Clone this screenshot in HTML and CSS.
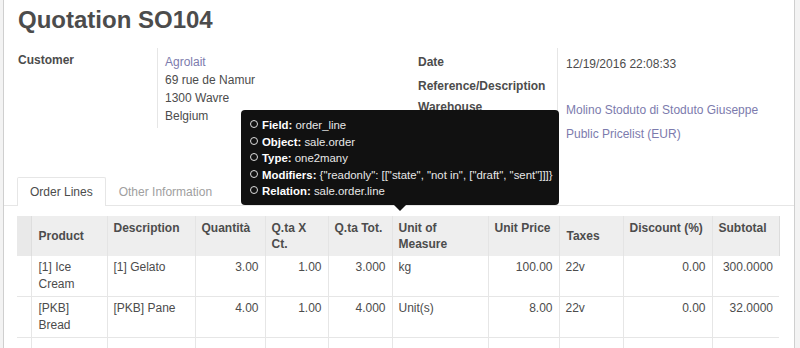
FILE: index.html
```html
<!DOCTYPE html>
<html lang="en">
<head>
    <meta charset="UTF-8">
    <title>Quotation SO104</title>
    <link rel="stylesheet" href="styles.css">
</head>
<body>
    <div class="sheet">
        <h1 class="title">Quotation SO104</h1>

        <div class="groups">
            <div class="group group-left">
                <div class="label">Customer</div>
                <div class="value address"><a href="#" class="link">Agrolait</a><br>69 rue de Namur<br>1300 Wavre<br>Belgium</div>
            </div>

            <div class="group group-right">
                <div class="label row-1">Date</div>
                <div class="value row-1">12/19/2016 22:08:33</div>
                <div class="label row-2">Reference/Description</div>
                <div class="value row-2"></div>
                <div class="label row-3">Warehouse</div>
                <div class="value row-3"><a href="#" class="link">Molino Stoduto di Stoduto Giuseppe</a></div>
                <div class="label row-4">Pricelist</div>
                <div class="value row-4"><a href="#" class="link">Public Pricelist (EUR)</a></div>
            </div>
        </div>

        <div class="notebook">
            <ul class="tabs">
                <li class="tab active">Order Lines</li>
                <li class="tab">Other Information</li>
            </ul>

            <table class="lines">
                <colgroup>
                    <col style="width:14px">
                    <col style="width:76px">
                    <col style="width:88px">
                    <col style="width:70px">
                    <col style="width:63px">
                    <col style="width:64px">
                    <col style="width:96px">
                    <col style="width:71px">
                    <col style="width:64px">
                    <col style="width:89px">
                    <col style="width:67px">
                </colgroup>
                <thead>
                    <tr>
                        <th class="handle"></th>
                        <th class="middle">Product</th>
                        <th>Description</th>
                        <th>Quantità</th>
                        <th>Q.ta X Ct.</th>
                        <th>Q.ta Tot.</th>
                        <th>Unit of Measure</th>
                        <th>Unit Price</th>
                        <th class="middle">Taxes</th>
                        <th>Discount (%)</th>
                        <th>Subtotal</th>
                    </tr>
                </thead>
                <tbody>
                    <tr>
                        <td class="handle"></td>
                        <td>[1] Ice Cream</td>
                        <td>[1] Gelato</td>
                        <td class="num">3.00</td>
                        <td class="num">1.00</td>
                        <td class="num">3.000</td>
                        <td>kg</td>
                        <td class="num">100.00</td>
                        <td>22v</td>
                        <td class="num">0.00</td>
                        <td class="num">300.0000</td>
                    </tr>
                    <tr>
                        <td class="handle"></td>
                        <td>[PKB] Bread</td>
                        <td>[PKB] Pane</td>
                        <td class="num">4.00</td>
                        <td class="num">1.00</td>
                        <td class="num">4.000</td>
                        <td>Unit(s)</td>
                        <td class="num">8.00</td>
                        <td>22v</td>
                        <td class="num">0.00</td>
                        <td class="num">32.0000</td>
                    </tr>
                    <tr class="empty">
                        <td class="handle"></td>
                        <td></td><td></td><td></td><td></td><td></td>
                        <td></td><td></td><td></td><td></td><td></td>
                    </tr>
                </tbody>
            </table>
        </div>

        <!-- debug tooltip over the notebook -->
        <div class="tooltip">
            <ul>
                <li><b>Field:</b> order_line</li>
                <li><b>Object:</b> sale.order</li>
                <li><b>Type:</b> one2many</li>
                <li><b>Modifiers:</b> {"readonly": [["state", "not in", ["draft", "sent"]]]}</li>
                <li><b>Relation:</b> sale.order.line</li>
            </ul>
        </div>
    </div>
</body>
</html>
```

FILE: styles.css
```css
:root {
    --text-color: #4c4c4c;
    --link-color: #7c7bad;
    --border-color: #d9d9d9;
    --line-color: #e6e6e6;
    --header-bg: #eeeeee;
}

* {
    box-sizing: border-box;
}

body {
    margin: 0;
    background-color: #f3f3f3;
    font-family: 'Liberation Sans', Arial, sans-serif;
    font-size: 12px;
    line-height: 18px;
    color: var(--text-color);
    overflow: hidden;
}

.sheet {
    position: relative;
    margin: 0 5px 0 3px;
    padding: 6px 14px 0 14px;
    height: 348px;
    overflow: hidden;
    background-color: white;
    border-left: 1px solid #cfcfcf;
    border-right: 1px solid #cfcfcf;
}

.title {
    margin: 0;
    font-size: 24px;
    line-height: 28px;
    font-weight: bold;
}

.link {
    color: var(--link-color);
    text-decoration: none;
}

.groups {
    display: grid;
    grid-template-columns: 392px 1fr;
    margin-top: 14px;
}

.label {
    font-weight: bold;
}

.group-left {
    display: grid;
    grid-template-columns: 139px 1fr;
    align-self: start;
}

.group-left .label {
    padding-top: 3px;
}

.group-left .value {
    padding: 5px 0 3px 7px;
    border-left: 1px solid var(--line-color);
}

.group-right {
    display: grid;
    grid-template-columns: 147px 1fr;
    grid-template-rows: 26px 22px 24px 28px;
}

.group-right .label {
    padding-left: 8px;
}

.group-right .value {
    padding-left: 8px;
    border-left: 1px solid var(--line-color);
}

.label.row-1 { padding-top: 5px; }
.value.row-1 { padding-top: 7px; }
.label.row-2 { padding-top: 3px; }
.label.row-3 { padding-top: 2px; }
.value.row-3 { padding-top: 5px; }
.label.row-4 { padding-top: 3px; }
.value.row-4 { padding-top: 5px; }

.notebook {
    margin-top: 29px;
}

.tabs {
    display: flex;
    list-style: none;
    margin: 0 -14px;
    padding: 0 0 0 13px;
    border-bottom: 1px solid var(--line-color);
}

.tab {
    padding: 5px 12px 4px 12px;
    border: 1px solid transparent;
    border-bottom: none;
    color: #a0a0a0;
}

.tab.active {
    color: var(--text-color);
    background-color: white;
    border-color: var(--line-color);
    border-radius: 2px 2px 0 0;
    margin-bottom: -1px;
    padding-bottom: 5px;
}

.lines {
    margin: 10px 0 0 -1px;
    width: 762px;
    table-layout: fixed;
    border-collapse: collapse;
}

.lines th {
    height: 40px;
    padding: 4px 6px;
    line-height: 16px;
    text-align: left;
    vertical-align: top;
    font-weight: bold;
    background-color: var(--header-bg);
    border-right: 1px solid #e4e4e4;
}

.lines th.middle {
    vertical-align: middle;
    padding-left: 7px;
}

.lines th:last-child {
    border-right: 1px solid #dcdcdc;
}

.lines td {
    height: 40px;
    padding: 3px 6px;
    line-height: 17px;
    vertical-align: top;
    border-bottom: 1px solid var(--line-color);
    border-right: 1px solid var(--line-color);
}

.lines td:first-child + td {
    padding-left: 7px;
}

.lines td:last-child {
    border-right: none;
}

.lines .handle {
    padding: 0;
    background-color: transparent;
}

.lines th.handle {
    background-color: #e9e9e9;
    border-right: 1px solid #dedede;
}

.lines .num {
    text-align: right;
}

.tooltip {
    position: absolute;
    left: 237px;
    top: 110px;
    width: 318px;
    height: 95px;
    padding: 7px 4px 0 9px;
    background-color: #111;
    color: #e8e8e8;
    border-radius: 4px;
    font-size: 11.4px;
    line-height: 16.5px;
}

.tooltip::after {
    content: "";
    position: absolute;
    left: 153px;
    bottom: -6px;
    border-left: 6px solid transparent;
    border-right: 6px solid transparent;
    border-top: 6px solid #111;
}

.tooltip ul {
    margin: 0;
    padding: 0;
    list-style: none;
    white-space: nowrap;
}

.tooltip li::before {
    content: "";
    display: inline-block;
    width: 6px;
    height: 6px;
    margin-right: 4px;
    border: 1px solid #ddd;
    border-radius: 50%;
    vertical-align: 1px;
}

.tooltip b {
    color: white;
}
```
